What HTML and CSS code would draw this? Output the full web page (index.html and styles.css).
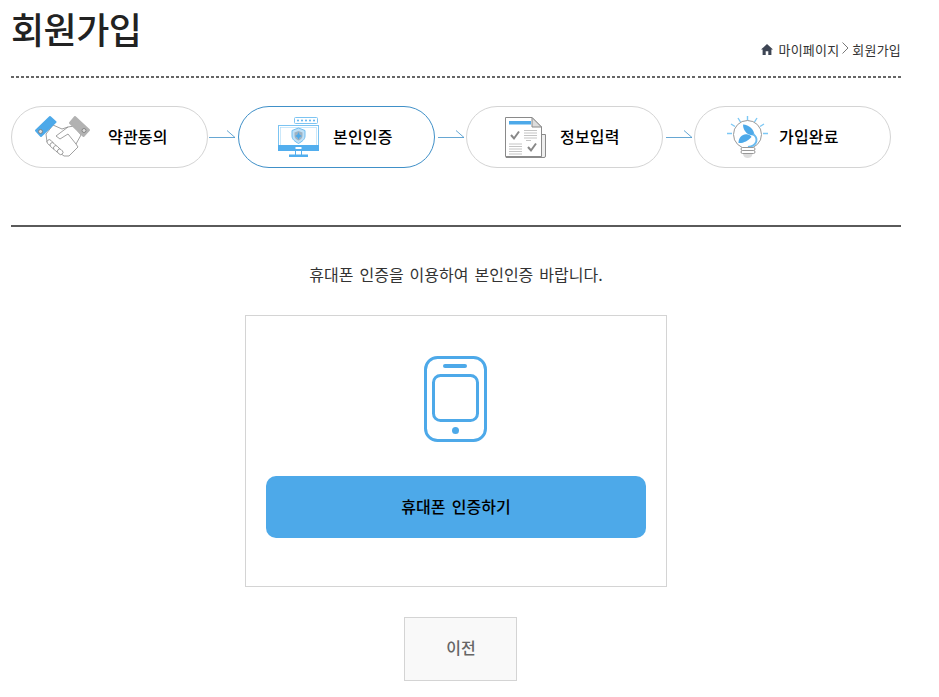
FILE: index.html
```html
<!DOCTYPE html>
<html lang="ko">
<head>
<meta charset="utf-8">
<title>회원가입</title>
<link rel="stylesheet" href="styles.css">
</head>
<body>
<div class="page">
  <header class="head">
    <h1 class="title">회원가입</h1>
    <nav class="crumb">
      <svg class="home" viewBox="0 0 12 11" width="12" height="11"><path d="M6 0 L12 5.600 H10.400 V11 H7.300 V7.200 H4.700 V11 H1.600 V5.600 H0 Z" fill="#3d4554"/></svg>
      <span>마이페이지</span>
      <svg class="chev" viewBox="0 0 7 12" width="7" height="12"><path d="M0.500 0.500 L6 6 L0.500 11.500" fill="none" stroke="#555" stroke-width="0.800"/></svg>
      <span>회원가입</span>
    </nav>
  </header>
  <div class="dots"></div>

  <ol class="steps">
    <li class="step">
      <svg class="ico ico-a" viewBox="35 116 56 44" width="56" height="44">
        <g fill="#fff" stroke="#888" stroke-width="0.800" stroke-linejoin="round">
          <path d="M53 126 L62 130 L68 128 L74 127 L81 136 L76 145 L78 148 L75 151 L72 154 L69 157 L64 157 L60 154 L50 146 L47 143 L46 135 Z"/>
          <path d="M68 128 L56 137 L60 140 L68 135 L76 145" fill="none"/>
          <rect x="46.500" y="141.500" width="7" height="4.500" rx="2.200" transform="rotate(45 50 144)"/>
          <rect x="49.500" y="144.500" width="7" height="4.500" rx="2.200" transform="rotate(45 53 147)"/>
          <rect x="53" y="147.500" width="7" height="4.500" rx="2.200" transform="rotate(45 56.500 150)"/>
          <rect x="57" y="150.500" width="6" height="4.500" rx="2.200" transform="rotate(45 60 153)"/>
        </g>
        <path d="M50 118 L55.500 123 L41 137 L36 131.500 Z" fill="#4da9e9" stroke="#4da9e9" stroke-width="2" stroke-linejoin="round"/>
        <path d="M75 118 L89 131 L83.500 137 L70 124 Z" fill="#b2b2b2" stroke="#b2b2b2" stroke-width="2" stroke-linejoin="round"/>
        <circle cx="40.500" cy="132.500" r="2" fill="#ddd" stroke="#777" stroke-width="0.800"/>
        <circle cx="84" cy="131.500" r="2" fill="#ddd" stroke="#777" stroke-width="0.800"/>
      </svg>
      <span class="label">약관동의</span>
    </li>
    <li class="link first"><svg viewBox="0 0 27 8" width="27" height="8"><path d="M0 7.500 H26 L18 0.500" fill="none" stroke="#4090c8" stroke-width="0.800"/></svg></li>
    <li class="step on">
      <svg class="ico ico-b" viewBox="0 0 42 40" width="42" height="40">
        <rect x="16.500" y="0.500" width="23" height="6" rx="1" fill="#fff" stroke="#7cc4f2"/>
        <g fill="#5bb0ee"><circle cx="20" cy="3.500" r="1"/><circle cx="24" cy="3.500" r="1"/><circle cx="28" cy="3.500" r="1"/><circle cx="32" cy="3.500" r="1"/><circle cx="36" cy="3.500" r="1"/></g>
        <rect x="0.500" y="8.500" width="40" height="25" fill="none" stroke="#7cc4f2"/>
        <rect x="2.500" y="10.500" width="36" height="18" fill="none" stroke="#a9d9f7" stroke-width="0.600"/>
        <rect x="0" y="28" width="41" height="6" fill="#52aeee"/>
        <rect x="17.500" y="30" width="6" height="2" fill="#fff"/>
        <path d="M17.500 34 V38 M23.500 34 V38" stroke="#52aeee" stroke-width="1"/>
        <rect x="11" y="37.500" width="19" height="2.500" fill="#52aeee"/>
        <path d="M20.500 11 L27 13.500 V19 C27 22.500 24 24.500 20.500 26.500 C17 24.500 14 22.500 14 19 V13.500 Z" fill="#bfe0f6" stroke="#6fbdf0"/>
        <path d="M20.500 14 L24.500 15.500 V19 C24.500 21 22.500 22.500 20.500 23.500 C18.500 22.500 16.500 21 16.500 19 V15.500 Z" fill="#9fb3c3"/>
        <path d="M20.500 15 L21.700 17.800 L24 19 L21.700 20.200 L20.500 22.500 L19.300 20.200 L17 19 L19.300 17.800 Z" fill="#4da9e9"/>
      </svg>
      <span class="label">본인인증</span>
    </li>
    <li class="link"><svg viewBox="0 0 27 8" width="27" height="8"><path d="M0 7.500 H26 L18 0.500" fill="none" stroke="#4090c8" stroke-width="0.800"/></svg></li>
    <li class="step">
      <svg class="ico ico-c" viewBox="0 0 41 41" width="41" height="41">
        <path d="M36.500 17.500 H40.500 V39 Q40.500 40.500 39 40.500 H1 V39.500 H36.500 Z" fill="#eee" stroke="#8a8a8a"/>
        <path d="M0.500 0.500 H27 L36.500 10 V39.500 H0.500 Z" fill="#fff" stroke="#8a8a8a"/>
        <path d="M27 0.500 V10 H36.500 Z" fill="#ddd" stroke="#8a8a8a"/>
        <rect x="4" y="4" width="22" height="3.500" fill="#4da9e9"/>
        <path d="M6 18 L9 21.500 L14 14.500 M23 30 L26 33.500 L31 26.500" fill="none" stroke="#888" stroke-width="2"/>
        <path d="M19 13.500 H32 M19 16 H32 M19 18.500 H32 M19 21 H32 M21 23.500 H26 M4 27 H17 M4 29.500 H17 M4 32 H17 M4 34.500 H17 M4 37 H17" stroke="#c4c4c4" stroke-width="1"/>
      </svg>
      <span class="label">정보입력</span>
    </li>
    <li class="link"><svg viewBox="0 0 27 8" width="27" height="8"><path d="M0 7.500 H26 L18 0.500" fill="none" stroke="#4090c8" stroke-width="0.800"/></svg></li>
    <li class="step">
      <svg class="ico ico-d" viewBox="727 116 41 42" width="41" height="42">
        <path d="M747.500 116 V120.500 M738 118 L740.500 122 M757 118 L754.500 122 M731 124 L735 126.500 M764 124 L760 126.500 M727 133.500 H732 M763 133.500 H768" stroke="#7cc8f5" stroke-width="1.400"/>
        <circle cx="747.500" cy="134.500" r="14" fill="#fff" stroke="#999"/>
        <path d="M743 124.500 C749 125 754 129 754.500 135.500 C749 136 743 132 743 124.500 Z" fill="#4da9e9"/>
        <path d="M738.500 143 C738.500 137 743 133 748 134.500 C750 135 751 136 751.500 137 C748 141 743 143.500 738.500 143 Z" fill="#4da9e9"/>
        <path d="M753 134 C758.500 138 758 145.500 748 147" fill="none" stroke="#6abbf0" stroke-width="2"/>
        <rect x="741" y="147.500" width="14" height="3" rx="1.500" fill="#fff" stroke="#999"/>
        <rect x="741" y="150.500" width="14" height="3" rx="1.500" fill="#fff" stroke="#999"/>
        <path d="M743 154 H752.500 C752 157 750 158 747.700 158 C745.500 158 743.500 157 743 154 Z" fill="#ddd"/>
      </svg>
      <span class="label">가입완료</span>
    </li>
  </ol>

  <main class="body">
    <p class="notice">휴대폰 인증을 이용하여 본인인증 바랍니다.</p>
    <section class="card">
      <svg class="phone" viewBox="0 0 64 86" width="64" height="86">
        <rect x="1.500" y="1.500" width="60" height="83" rx="12" fill="none" stroke="#4da9e9" stroke-width="3"/>
        <rect x="19" y="8" width="24" height="4" rx="2" fill="#4da9e9"/>
        <rect x="9.500" y="19.500" width="44" height="45" rx="7" fill="none" stroke="#4da9e9" stroke-width="3"/>
        <circle cx="31.500" cy="74.500" r="3.500" fill="#4da9e9"/>
      </svg>
      <button class="cta" type="button">휴대폰 인증하기</button>
    </section>
    <button class="prev" type="button">이전</button>
  </main>
</div>
</body>
</html>
```
FILE: styles.css
```css
* { box-sizing: border-box; }
html, body { margin: 0; padding: 0; background: #fff; }
body { font-family: "Noto Sans CJK KR", "Noto Sans", sans-serif; color: #222; overflow: hidden; }
.page { width: 890px; margin-left: 11px; }

.head {
  height: 76px;
  display: flex;
  justify-content: space-between;
}
.dots {
  height: 2px;
  background: repeating-linear-gradient(90deg, #666 0, #666 3px, transparent 3px, transparent 5.011px);
}
.title { margin: 0; font-size: 36px; line-height: 57px; font-weight: 500; color: #222; letter-spacing: -0.5px; }
.crumb {
  display: flex;
  align-items: center;
  gap: 3px;
  height: 20px;
  margin-top: 39px;
  font-size: 13px;
  letter-spacing: 0.200px;
  color: #333;
}
.home { margin-right: 3px; }
.chev { margin-top: -2px; }

.steps {
  list-style: none;
  margin: 28px 0 0;
  padding: 0 0 57px;
  display: flex;
  align-items: center;
  border-bottom: 2px solid #5a5a5a;
}
.step {
  width: 197px;
  height: 62px;
  flex: none;
  border: 1px solid #d4d4d4;
  border-radius: 31px;
  display: flex;
  align-items: center;
  background: #fff;
}
.step.on { border-color: #4090c8; }
.link { width: 31px; height: 62px; flex: none; display: flex; align-items: center; padding-left: 3px; }
.link.first { width: 30px; padding-left: 1px; }
.link svg { display: block; margin-top: -7px; }
.label { font-size: 16px; font-weight: 500; color: #000; line-height: 20px; margin-top: -3px; letter-spacing: 0.200px; }
.ico { flex: none; display: block; }
.ico-a { margin-left: 23px; margin-right: 17px; }
.ico-b { margin-left: 39px; margin-right: 13px; }
.ico-c { margin-left: 38px; margin-right: 14px; }
.ico-d { margin-left: 32px; margin-right: 11px; }

.body { display: flex; flex-direction: column; align-items: center; }
.notice { margin: 35px 0 0; font-size: 16px; line-height: 24px; color: #333; word-spacing: 1.500px; }
.card {
  width: 422px;
  height: 272px;
  margin-top: 29px;
  border: 1px solid #d4d4d4;
  display: flex;
  flex-direction: column;
  align-items: center;
  padding-top: 40px;
}
.phone { display: block; flex: none; }
.cta {
  width: 380px;
  height: 62px;
  margin-top: 34px;
  padding: 0 0 2px;
  border: 0;
  border-radius: 10px;
  background: #4da9e9;
  color: #000;
  font: 500 16px "Noto Sans CJK KR", sans-serif;
  word-spacing: 2px;
}
.prev {
  width: 113px;
  height: 64px;
  margin: 30px 0 0 8px;
  padding: 0 0 4px 2px;
  border: 1px solid #d4d4d4;
  background: #f9f9f9;
  color: #666;
  font: 500 16px "Noto Sans CJK KR", sans-serif;
}
```
